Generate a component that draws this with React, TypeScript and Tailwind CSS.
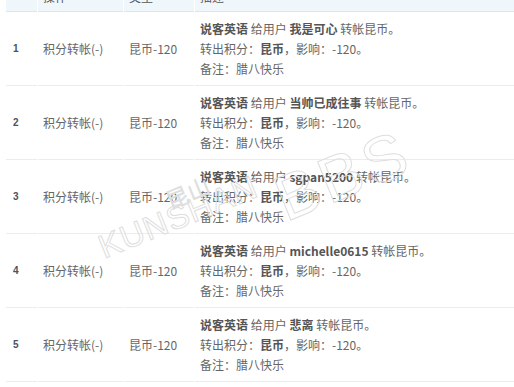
import React from "react";

const rows = [
  { n: 1, name: "我是可心" },
  { n: 2, name: "当帅已成往事" },
  { n: 3, name: "sgpan5200" },
  { n: 4, name: "michelle0615" },
  { n: 5, name: "悲离" },
];

const font = {
  fontFamily: '"Noto Sans CJK SC", "Noto Sans", sans-serif',
};

export default function App() {
  return (
    <div className="relative w-[514px] h-[387px] overflow-hidden bg-white" style={font}>
      <div className="ml-[6px] w-[520px] text-[12px] text-[#666]">
        {/* header */}
        <div className="flex gap-px h-[12px]">
          <div className="w-[31px] h-[12px] bg-[#f0f7fb] border-b border-[#d7e6f1]" />
          <div className="w-[85px] h-[12px] bg-[#f0f7fb] border-b border-[#d7e6f1] overflow-hidden pl-[5px]">
            <div className="mt-[-10px] leading-[14px] text-[#555]">操作</div>
          </div>
          <div className="w-[70px] h-[12px] bg-[#f0f7fb] border-b border-[#d7e6f1] overflow-hidden pl-[5px]">
            <div className="mt-[-10px] leading-[14px] text-[#555]">类型</div>
          </div>
          <div className="flex-1 h-[12px] bg-[#f0f7fb] border-b border-[#d7e6f1] overflow-hidden pl-[5px]">
            <div className="mt-[-10px] leading-[14px] text-[#555]">描述</div>
          </div>
        </div>
        {rows.map((r) => (
          <div key={r.n} className="flex gap-px h-[74px]">
            <div className="w-[31px] border-b border-[#e6eef4] flex items-center pl-[7px] text-[10px] text-[#4a5260] font-['Liberation_Sans'] font-bold">
              {r.n}
            </div>
            <div className="w-[85px] border-b border-[#e6eef4] flex items-center pl-[5px]">
              积分转帐(-)
            </div>
            <div className="w-[70px] border-b border-[#e6eef4] flex items-center pl-[5px]">
              昆币-120
            </div>
            <div className="flex-1 border-b border-[#e6eef4] pl-[5px] pt-[7px] pb-[6px] leading-[20px]">
              <div>
                <b className="font-bold text-[#555]">说客英语</b> 给用户{" "}
                <b className="font-bold text-[#555]">{r.name}</b> 转帐昆币。
              </div>
              <div>
                转出积分：<b className="font-bold text-[#555]">昆币</b>，影响：-120。
              </div>
              <div>备注：腊八快乐</div>
            </div>
          </div>
        ))}
      </div>

      {/* watermark */}
      <div className="pointer-events-none absolute left-[108px] top-[204px] origin-bottom-left rotate-[-22deg] whitespace-nowrap flex items-baseline">
        <span className="text-[33px] leading-none tracking-[1px] text-transparent [-webkit-text-stroke:1px_#dedede] font-['Liberation_Sans'] font-light">
          KUNS
        </span>
        <span className="relative text-[33px] leading-none tracking-[1px] text-transparent [-webkit-text-stroke:1px_#dedede] font-['Liberation_Sans'] font-light">
          HAN
          <span className="absolute left-[-16px] top-[-14px] text-[22px] leading-none text-transparent [-webkit-text-stroke:1px_#dedede]" style={font}>
            昆山
          </span>
        </span>
        <span className="relative top-[34px] ml-[14px] text-[64px] leading-none tracking-[4px] text-transparent [-webkit-text-stroke:1px_#dedede] font-['Liberation_Sans'] font-light">
          BBS
        </span>
      </div>
    </div>
  );
}
